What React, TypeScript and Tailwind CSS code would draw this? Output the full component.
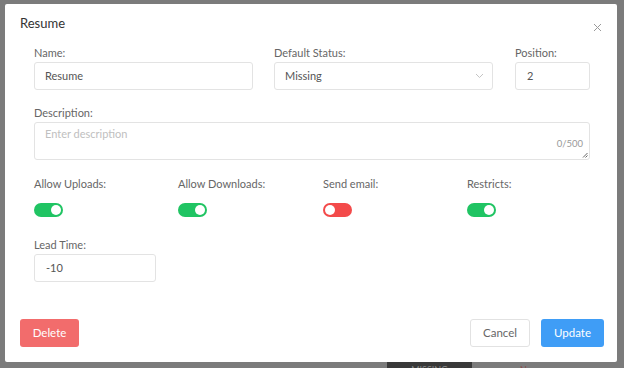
import React from 'react';

const font = { fontFamily: 'Lato, "Noto Sans", "Liberation Sans", sans-serif' };

function Toggle({ on }: { on: boolean }) {
  return (
    <div
      className={`w-[29px] h-[14px] rounded-full p-[2px] flex ${
        on ? 'bg-[#20c463] justify-end' : 'bg-[#f34a4a] justify-start'
      }`}
    >
      <div className="w-[10px] h-[10px] rounded-full bg-white" />
    </div>
  );
}

function Label({ children }: { children: React.ReactNode }) {
  return <div className="text-[11px] leading-[14px] text-[#666] mb-[2px]">{children}</div>;
}

export default function App() {
  const toggles = [
    { label: 'Allow Uploads:', on: true },
    { label: 'Allow Downloads:', on: true },
    { label: 'Send email:', on: false },
    { label: 'Restricts:', on: true },
  ];

  return (
    <div className="w-[624px] h-[368px] bg-[#7b7b7b] overflow-hidden flex flex-col" style={font}>
      {/* Modal */}
      <div className="mt-[4px] ml-[5px] w-[612px] h-[358px] bg-white rounded-[2px] flex flex-col pt-[10px] pb-[15px]">
        {/* Header */}
        <div className="flex items-center justify-between pl-[15px] pr-[15px] h-[18px]">
          <span className="text-[13px] leading-[18px] text-[#333]">Resume</span>
          <svg width="9" height="9" viewBox="0 0 9 9" className="mt-[8px]">
            <path d="M1 1L8 8M8 1L1 8" stroke="#9a9a9a" strokeWidth="1" />
          </svg>
        </div>

        {/* Body */}
        <div className="pl-[29px] mt-[14px]">
          {/* Row 1 */}
          <div className="flex gap-[21px]">
            <div className="w-[219px]">
              <Label>Name:</Label>
              <div className="h-[28px] border border-[#e3e3e3] rounded-[3px] flex items-center pl-[10px] text-[11px] text-[#555]">
                Resume
              </div>
            </div>
            <div className="w-[219px]">
              <Label>Default Status:</Label>
              <div className="h-[28px] border border-[#e3e3e3] rounded-[3px] flex items-center justify-between pl-[10px] pr-[8px] text-[11px] text-[#555]">
                <span>Missing</span>
                <svg width="9" height="6" viewBox="0 0 9 6">
                  <path d="M1 1L4.5 4.5L8 1" stroke="#c4c4c4" strokeWidth="1" fill="none" />
                </svg>
              </div>
            </div>
            <div className="w-[75px] ml-[1px]">
              <Label>Position:</Label>
              <div className="h-[28px] border border-[#e3e3e3] rounded-[3px] flex items-center pl-[11px] text-[11px] text-[#555]">
                2
              </div>
            </div>
          </div>

          {/* Description */}
          <div className="mt-[16px] w-[556px]">
            <Label>Description:</Label>
            <div className="h-[38px] border border-[#e3e3e3] rounded-[3px] relative pl-[10px] pt-[3px] text-[11px] text-[#c0c0c0]">
              Enter description
              <span className="absolute right-[6px] bottom-[8px] text-[9.5px] text-[#999]">0/500</span>
              <svg width="6" height="6" viewBox="0 0 6 6" className="absolute right-[1px] bottom-[1px]">
                <path d="M1 5.5L5.5 1M3.5 5.5L5.5 3.5" stroke="#555" strokeWidth="0.9" />
              </svg>
            </div>
          </div>

          {/* Toggles */}
          <div className="mt-[17px] grid grid-cols-[144px_145px_144px_145px]">
            {toggles.map((t) => (
              <div key={t.label}>
                <div className="text-[11px] leading-[14px] text-[#666] mb-[12px]">{t.label}</div>
                <Toggle on={t.on} />
              </div>
            ))}
          </div>

          {/* Lead Time */}
          <div className="mt-[21px] w-[122px]">
            <Label>Lead Time:</Label>
            <div className="h-[28px] border border-[#e3e3e3] rounded-[3px] flex items-center pl-[11px] text-[11px] text-[#555]">
              -10
            </div>
          </div>
        </div>

        {/* Footer */}
        <div className="mt-auto flex items-center pl-[15px] pr-[13px]">
          <button className="w-[59px] h-[28px] rounded-[3px] bg-[#f26c6c] text-white text-[11.5px]">Delete</button>
          <div className="ml-auto flex gap-[11px]">
            <button className="w-[60px] h-[28px] rounded-[3px] border border-[#e2e2e2] bg-white text-[#666] text-[11.5px]">
              Cancel
            </button>
            <button className="w-[63px] h-[28px] rounded-[3px] bg-[#3f9df6] text-white text-[11.5px]">Update</button>
          </div>
        </div>
      </div>

      {/* Page behind overlay */}
      <div className="h-[6px] flex items-start overflow-hidden">
        <div className="ml-[387px] w-[85px] h-[6px] bg-[#393939] flex justify-center pt-[3px]">
          <span className="text-[9px] leading-[9px] text-[#888]">MISSING</span>
        </div>
        <span className="ml-[48px] pt-[3px] text-[9px] leading-[9px] text-[#8a4a4a]">No</span>
      </div>
    </div>
  );
}
